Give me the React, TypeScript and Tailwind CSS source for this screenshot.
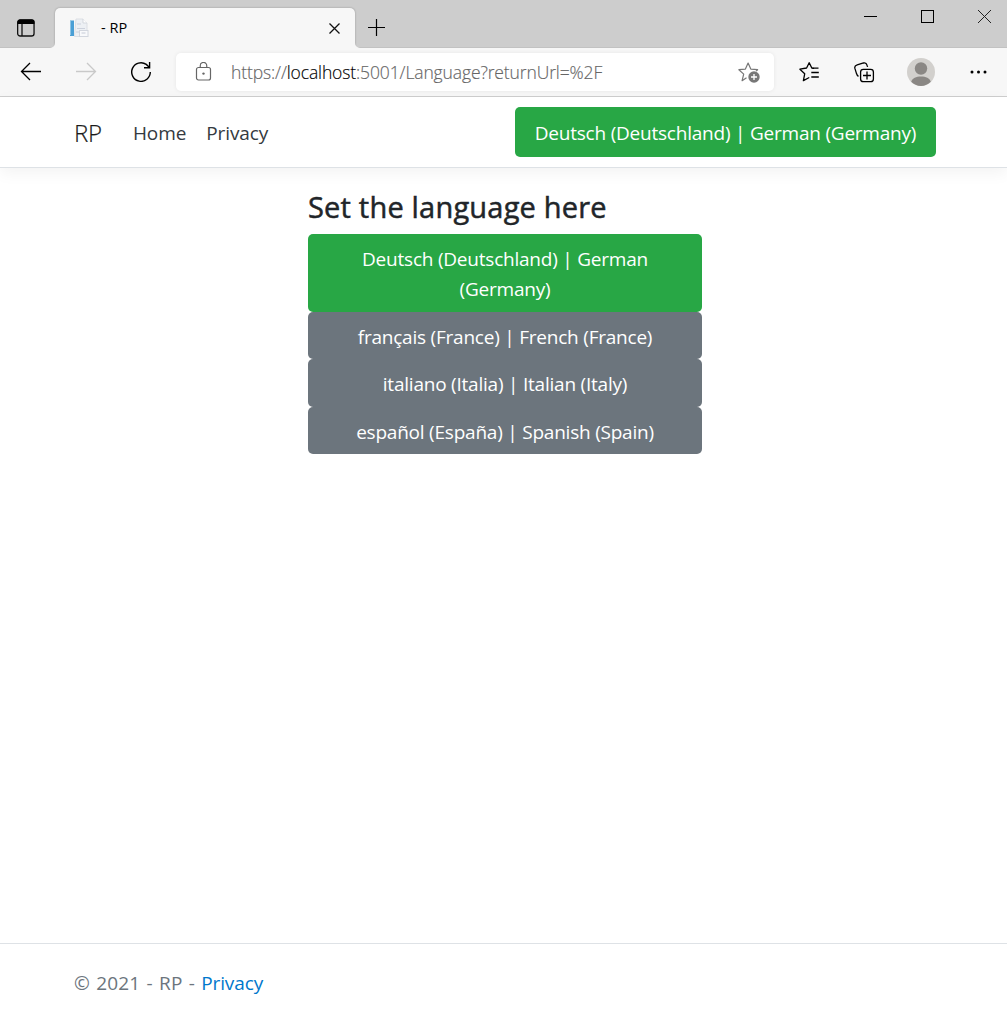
import type { ReactNode } from 'react';

function TabStrip() {
  return (
    <div className="flex h-12 bg-[#cdcdcd] shadow-[inset_0_-1px_0_#c2c2c2]">
      <div className="flex w-[55px] pt-[18px] pl-[16px]">
        <svg width="20" height="20" viewBox="0 0 20 20" fill="none" stroke="#111" strokeWidth="1.3">
          <rect x="1.65" y="2" width="16.4" height="16" rx="2.6" />
          <path d="M1.5 6V4a2.5 2.5 0 0 1 2.5-2.5h12A2.5 2.5 0 0 1 18.500 4v2z" fill="#000" stroke="none" />
          <path d="M6 6v12" />
        </svg>
      </div>
      <div className="relative z-10 mt-2 flex h-12 w-[300px] items-start rounded-t-[5px] bg-[#f7f7f7] shadow-[0_0_2px_rgba(0,0,0,0.3)] [clip-path:inset(-3px_-8px_8px_-8px)]">
        <svg className="absolute top-[35px] -left-[5px]" width="5" height="5" viewBox="0 0 5 5">
          <path d="M5 0v5H0a5 5 0 0 0 5-5z" fill="#f7f7f7" />
        </svg>
        <svg className="absolute top-[35px] -right-[5px]" width="5" height="5" viewBox="0 0 5 5">
          <path d="M0 0v5h5a5 5 0 0 1-5-5z" fill="#f7f7f7" />
        </svg>
        <svg className="mt-[10px] ml-[14px]" width="20" height="20" viewBox="0 0 20 20" fill="none">
          <path d="M7 1h7l4 4v13.500H5.500z" fill="#edf0f4" stroke="#dcdfe4" />
          <path d="M14 1v4h4" fill="#fff" stroke="#d3d7dd" />
          <rect x="1" y="2.500" width="4" height="15.500" fill="#4a9fd5" />
          <path d="M1.500 3v14" stroke="#8fc4e5" />
          <path d="M8 6h4M8 10.500h8M7 14h3" stroke="#ccd1dc" />
          <rect x="10.500" y="12.500" width="8.500" height="6" fill="#f8f9fb" stroke="#d2d6de" />
          <path d="M12.500 15h4" stroke="#c6cbd6" />
        </svg>
        <span className="mt-[10px] ml-[12px] text-[14.500px] leading-5 text-black">- RP</span>
        <svg className="mt-[15px] mr-[15px] ml-auto" width="11" height="11" viewBox="0 0 11 11" stroke="#111" strokeWidth="1.3">
          <path d="M.5.5l10 10M10.500.5l-10 10" />
        </svg>
      </div>
      <svg className="mt-[19px] ml-[13px]" width="17" height="17" viewBox="0 0 17 17" stroke="#000" strokeWidth="1.2">
        <path d="M8.500 0v17M0 8.500h17" />
      </svg>
      <div className="mt-[10px] mr-[16px] ml-auto flex gap-[44px]">
        <svg width="13" height="13" viewBox="0 0 13 13" stroke="#000">
          <path d="M0 6.500h13" />
        </svg>
        <svg width="13" height="13" viewBox="0 0 13 13" fill="none" stroke="#000">
          <rect x=".5" y=".5" width="12" height="12" />
        </svg>
        <svg width="13" height="13" viewBox="0 0 13 13" stroke="#222">
          <path d="M0 0l13 13M13 0L0 13" />
        </svg>
      </div>
    </div>
  );
}

function Toolbar() {
  return (
    <div className="flex h-[49px] items-center border-b border-[#cecece] bg-[#f7f7f7] pl-[20px]">
      <svg width="22" height="20" viewBox="0 0 22 20" fill="none" stroke="#000" strokeWidth="1.3">
        <path d="M1.500 9.500h19.500M10 1L1.500 9.500l8.500 8.500" />
      </svg>
      <svg className="ml-[34px]" width="21" height="20" viewBox="0 0 21 20" fill="none" stroke="#c9c9c9" strokeWidth="1.3">
        <path d="M0 9.500h19.500M11 1l8.500 8.500-8.500 8.500" />
      </svg>
      <svg className="ml-[34px]" width="20" height="20" viewBox="0 0 20 20" fill="none" stroke="#000" strokeWidth="1.4">
        <path d="M19.300 10A9.300 9.300 0 1 1 15.300 2.400L18.500 5.600" />
        <path d="M18.600 0v5.700h-5.600" />
      </svg>
      <div className="ml-[25px] flex h-[38px] w-[598px] items-center rounded-[5px] bg-white shadow-[0_0_4px_rgba(0,0,0,0.07)]">
        <svg className="ml-[19px]" width="17" height="20" viewBox="0 0 17 20" fill="none" stroke="#666" strokeWidth="1.2">
          <rect x="1.500" y="5.500" width="14" height="12.500" rx="2" />
          <path d="M5.250 5.500V3.700a3.250 3.250 0 0 1 6.500 0V5.500" />
          <circle cx="8.500" cy="11.600" r="1.200" fill="#666" stroke="none" />
        </svg>
        <span className="ml-[19px] text-[17.500px] leading-6 font-light tracking-[-0.12px] whitespace-nowrap text-[#666] [-webkit-text-stroke:0.15px]">
          https://<span className="text-black">localhost</span>:5001/Language?returnUrl=%2F
        </span>
        <svg className="mr-[14px] ml-auto" width="22" height="22" viewBox="0 0 22 22" fill="none" stroke="#777" strokeWidth="1.2">
          <path d="M8.500 16.700L4.100 19.700 5.700 13.100.900 8.700l6.500-.6L10.100 2l2.700 6.100 6.800.6-1.500 1.400" strokeLinejoin="round" />
          <circle cx="16" cy="16" r="5.700" fill="#777" stroke="none" />
          <path d="M16 13v6M13 16h6" stroke="#fff" strokeWidth="1.300" />
        </svg>
      </div>
      <svg className="ml-[25px]" width="21" height="20" viewBox="0 0 21 20" fill="none" stroke="#000" strokeWidth="1.3" strokeLinejoin="round" strokeLinecap="round">
        <path d="M14.500 6.300l-1.700-.3L10.200.700 7.600 6 .9 7.200l4.800 4.600L4.400 18.600l5.400-2.900" />
        <path d="M13.500 6.200h6M12.300 10.500h7.500M12.300 15h7.500" strokeLinecap="butt" />
      </svg>
      <svg className="ml-[34px]" width="21" height="21" viewBox="0 0 21 21" fill="none" stroke="#000" strokeWidth="1.3">
        <rect x="6.600" y="7.400" width="12.800" height="12.300" rx="2.700" />
        <path d="M13 9.500v8M9 13.500h8M4.500 14.400C3 13.700 2.800 12.500 2.200 10.600L.9 6.400C.3 4.100 1.200 3.400 3.200 2.800L9.500 1c2-.5 3 .3 3.500 2.200l.6 1.700" />
      </svg>
      <svg className="ml-[32px]" width="28" height="28" viewBox="0 0 28 28">
        <circle cx="14" cy="14" r="14" fill="#d2d0cd" />
        <circle cx="14" cy="10.500" r="6.200" fill="#8a8784" />
        <path d="M4.200 23.800C5.500 20 9 18.500 14 18.500s8.500 1.500 9.800 5.300A14 14 0 0 1 14 28a14 14 0 0 1-9.800-4.200z" fill="#8a8784" />
      </svg>
      <svg className="ml-[35px]" width="17" height="4" viewBox="0 0 17 4">
        <circle cx="2" cy="2" r="1.500" />
        <circle cx="8.500" cy="2" r="1.500" />
        <circle cx="15" cy="2" r="1.500" />
      </svg>
    </div>
  );
}

function LanguageButton({ active = false, children }: { active?: boolean; children: ReactNode }) {
  return (
    <button
      className={`block w-full rounded-[5px] px-[16px] pt-[10px] pb-[7.500px] text-center text-[19px] leading-[30px] tracking-[-0.22px] text-white ${
        active ? 'bg-[#28a745]' : 'bg-[#6c757d]'
      }`}
    >
      {children}
    </button>
  );
}

export default function App() {
  return (
    <div className="flex h-[1011px] w-[1007px] flex-col overflow-hidden bg-white font-['Open_Sans','Noto_Sans',sans-serif] text-[#212529]">
      <TabStrip />
      <Toolbar />
      <header className="flex h-[71px] shrink-0 items-center border-b border-[#dee2e6] pr-[71px] pl-[74px] shadow-[0_5px_15px_rgba(0,0,0,0.05)]">
        <a className="pt-[2px] text-[24px] leading-[36px] font-light tracking-[-0.200px] text-[#1a1a1a] [-webkit-text-stroke:0.2px]">RP</a>
        <nav className="ml-[31px] flex gap-[20px] pt-[2px] text-[19px] leading-[30px] tracking-[-0.1px] text-[#343a40]">
          <a>Home</a>
          <a>Privacy</a>
        </nav>
        <button className="ml-auto h-[50px] w-[421px] rounded-[5px] bg-[#28a745] pt-[2px] text-[19px] leading-[30px] tracking-[-0.220px] whitespace-nowrap text-white">
          Deutsch (Deutschland) | German (Germany)
        </button>
      </header>
      <main className="ml-[308px] w-[394px] flex-1 pt-[21px]">
        <h1 className="mb-[9px] text-[29px] leading-[36px] tracking-[0.200px] whitespace-nowrap [-webkit-text-stroke:0.500px]">
          Set the language here
        </h1>
        <LanguageButton active>
          Deutsch (Deutschland) | German
          <br />
          (Germany)
        </LanguageButton>
        <LanguageButton>français (France) | French (France)</LanguageButton>
        <LanguageButton>italiano (Italia) | Italian (Italy)</LanguageButton>
        <LanguageButton>español (España) | Spanish (Spain)</LanguageButton>
      </main>
      <footer className="h-[68px] shrink-0 border-t border-[#dee2e6] pt-[24px] pl-[74px] text-[19px] leading-[30px] text-[#6c757d]">
        <span className="tracking-[0.200px] [word-spacing:1px]">© 2021 - RP - </span>
        <a className="tracking-[-0.1px] text-[#0077cc]">Privacy</a>
      </footer>
    </div>
  );
}
